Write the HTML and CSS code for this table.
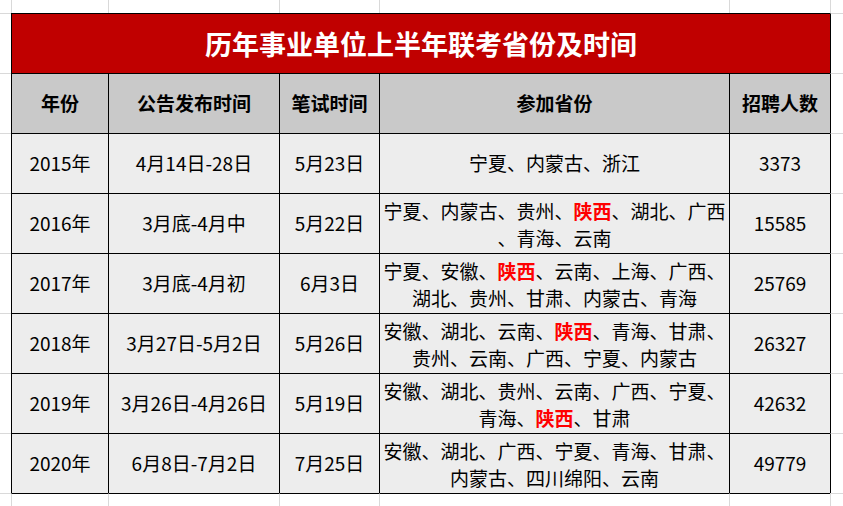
FILE: index.html
```html
<!DOCTYPE html>
<html lang="zh-CN">
<head>
<meta charset="utf-8">
<title>历年事业单位上半年联考省份及时间</title>
<link rel="stylesheet" href="styles.css">
</head>
<body>
<div class="sheet">
  <!-- row 1 -->
  <div class="g top first"></div>
  <div class="g top"></div>
  <div class="g top"></div>
  <div class="g top"></div>
  <div class="g top"></div>
  <div class="g top"></div>
  <div class="g top"></div>

  <!-- title row -->
  <div class="g first"></div>
  <div class="c title"><span>历年事业单位上半年联考省份及时间</span></div>
  <div class="g edge-r"></div>

  <!-- header -->
  <div class="g first"></div>
  <div class="c head"><span>年份</span></div>
  <div class="c head"><span>公告发布时间</span></div>
  <div class="c head"><span>笔试时间</span></div>
  <div class="c head"><span>参加省份</span></div>
  <div class="c head"><span>招聘人数</span></div>
  <div class="g edge-r"></div>

  <!-- 2015 -->
  <div class="g first"></div>
  <div class="c"><span>2015年</span></div>
  <div class="c"><span>4月14日-28日</span></div>
  <div class="c"><span>5月23日</span></div>
  <div class="c"><span>宁夏、内蒙古、浙江</span></div>
  <div class="c"><span>3373</span></div>
  <div class="g edge-r"></div>

  <!-- 2016 -->
  <div class="g first"></div>
  <div class="c"><span>2016年</span></div>
  <div class="c"><span>3月底-4月中</span></div>
  <div class="c"><span>5月22日</span></div>
  <div class="c multi"><span>宁夏、内蒙古、贵州、<b class="hl">陕西</b>、湖北、广西<br>、青海、云南</span></div>
  <div class="c"><span>15585</span></div>
  <div class="g edge-r"></div>

  <!-- 2017 -->
  <div class="g first"></div>
  <div class="c"><span>2017年</span></div>
  <div class="c"><span>3月底-4月初</span></div>
  <div class="c"><span>6月3日</span></div>
  <div class="c multi"><span>宁夏、安徽、<b class="hl">陕西</b>、云南、上海、广西、<br>湖北、贵州、甘肃、内蒙古、青海</span></div>
  <div class="c"><span>25769</span></div>
  <div class="g edge-r"></div>

  <!-- 2018 -->
  <div class="g first"></div>
  <div class="c"><span>2018年</span></div>
  <div class="c"><span>3月27日-5月2日</span></div>
  <div class="c"><span>5月26日</span></div>
  <div class="c multi"><span>安徽、湖北、云南、<b class="hl">陕西</b>、青海、甘肃、<br>贵州、云南、广西、宁夏、内蒙古</span></div>
  <div class="c"><span>26327</span></div>
  <div class="g edge-r"></div>

  <!-- 2019 -->
  <div class="g first"></div>
  <div class="c"><span>2019年</span></div>
  <div class="c"><span>3月26日-4月26日</span></div>
  <div class="c"><span>5月19日</span></div>
  <div class="c multi"><span>安徽、湖北、贵州、云南、广西、宁夏、<br>青海、<b class="hl">陕西</b>、甘肃</span></div>
  <div class="c"><span>42632</span></div>
  <div class="g edge-r"></div>

  <!-- 2020 -->
  <div class="g first"></div>
  <div class="c"><span>2020年</span></div>
  <div class="c"><span>6月8日-7月2日</span></div>
  <div class="c"><span>7月25日</span></div>
  <div class="c multi"><span>安徽、湖北、广西、宁夏、青海、甘肃、<br>内蒙古、四川绵阳、云南</span></div>
  <div class="c"><span>49779</span></div>
  <div class="g edge-r"></div>

  <!-- bottom row -->
  <div class="g first"></div>
  <div class="g edge-t"></div>
  <div class="g edge-t"></div>
  <div class="g edge-t"></div>
  <div class="g edge-t"></div>
  <div class="g edge-t"></div>
  <div class="g"></div>
</div>
</body>
</html>
```

FILE: styles.css
```css
html, body {
  margin: 0;
  padding: 0;
  background: #ffffff;
}

body {
  width: 843px;
  height: 506px;
  overflow: hidden;
  font-family: "Noto Sans CJK SC", "Noto Sans", sans-serif;
  color: #000000;
}

.sheet {
  display: grid;
  grid-template-columns: 11px 97px 171px 100px 350px 101px 13px;
  grid-template-rows: 13px repeat(8, 60px) 13px;
}

.g,
.c {
  box-sizing: border-box;
  border-left: 1px solid #d9d9d9;
  border-top: 1px solid #d9d9d9;
}

.g.first {
  border-left: none;
}

.g.top {
  border-top: none;
}

.g.edge-r {
  border-left-color: #000000;
}

.g.edge-t {
  border-top-color: #000000;
}

.c {
  border-left-color: #000000;
  border-top-color: #000000;
  background: #ededed;
  display: flex;
  align-items: center;
  justify-content: center;
  text-align: center;
  font-size: 19px;
  line-height: 27px;
  white-space: nowrap;
  overflow: hidden;
  padding-bottom: 2px;
}

.c.title {
  grid-column: span 5;
  background: #c00000;
  color: #ffffff;
  font-size: 27px;
  font-weight: bold;
  line-height: 34px;
  padding-top: 1px;
  padding-bottom: 0;
}

.c.head {
  background: #c9c9c9;
  font-weight: bold;
}

.c.multi {
  padding-top: 1px;
  padding-bottom: 0;
}

.hl {
  color: #ff0000;
  font-weight: bold;
}
```
